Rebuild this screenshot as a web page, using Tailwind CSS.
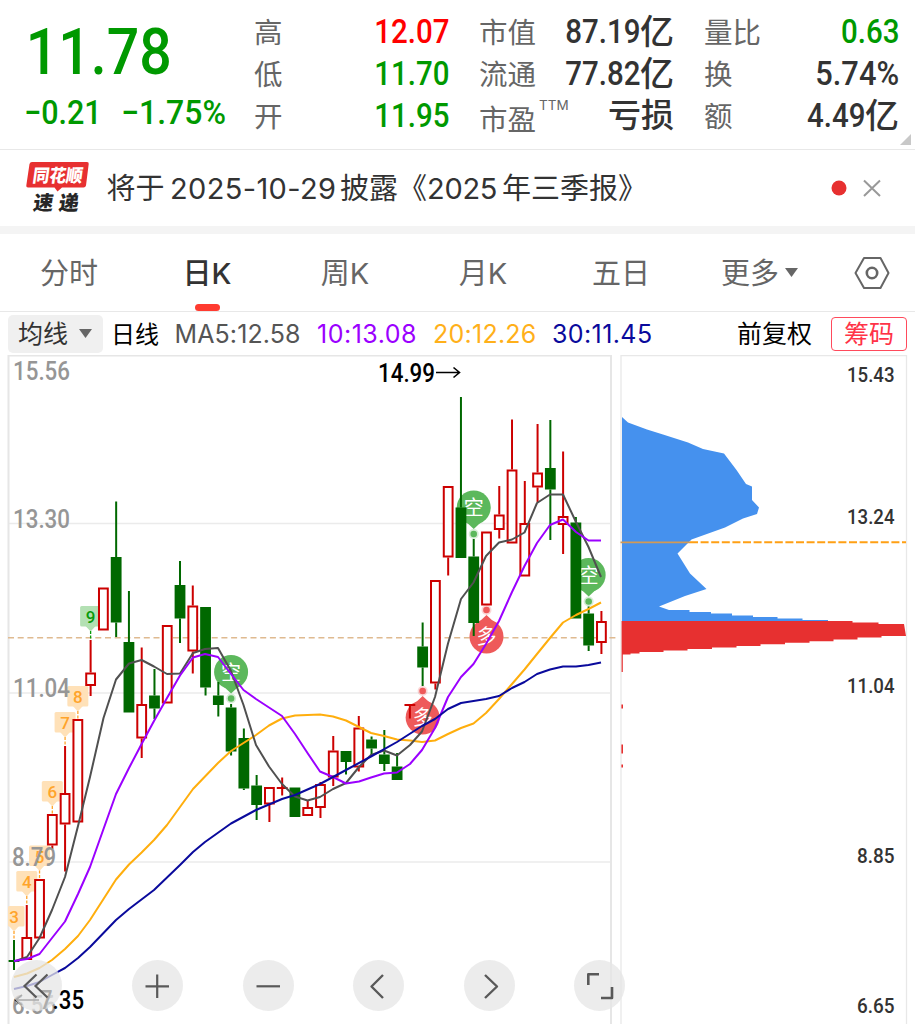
<!DOCTYPE html>
<html lang="zh-CN">
  <head>
    <meta charset="UTF-8" />
    <title>日K</title>
    <meta name="viewport" content="width=device-width, initial-scale=1.0" />
    <script src="https://cdn.jsdelivr.net/npm/@tailwindcss/browser@4"></script>
  </head>
  <body class="w-[915px] h-[1024px] overflow-hidden bg-white text-[#333] font-[Inter,'Noto_Sans_CJK_SC',sans-serif]">
    <!-- quote -->
    <header class="relative flex h-[150px] border-b border-[#e8e8e8] font-[Roboto,'Noto_Sans_CJK_SC',sans-serif]">
      <div class="w-[254px] pl-[24px] pt-[15px] text-[#090]">
        <div class="h-[74px] leading-[74px] text-[65px] font-medium"><span class="inline-block origin-left scale-x-[.88] pl-[2px]">11.78</span></div>
        <div class="flex h-[48px] leading-[48px] text-[33.5px] font-medium">
          <span class="w-[97px]"><span class="inline-block origin-left scale-x-[.91] whitespace-nowrap">−0.21</span></span>
          <span class="inline-block origin-left scale-x-[.955] whitespace-nowrap">−1.75%</span>
        </div>
      </div>
      <div class="w-[195px] pt-[11px] text-[28.5px] text-[#666]">
        <div class="flex h-[42px] items-center justify-between"><span class="pt-[4px]">高</span><b class="origin-right scale-x-[.88] text-[33.5px] font-medium text-[#f00]">12.07</b></div>
        <div class="flex h-[42px] items-center justify-between"><span class="pt-[4px]">低</span><b class="origin-right scale-x-[.88] text-[33.5px] font-medium text-[#090]">11.70</b></div>
        <div class="flex h-[42px] items-center justify-between"><span class="pt-[4px]">开</span><b class="origin-right scale-x-[.88] text-[33.5px] font-medium text-[#090]">11.95</b></div>
      </div>
      <div class="ml-[30px] w-[195px] pt-[11px] text-[28.5px] text-[#666]">
        <div class="flex h-[42px] items-center justify-between"><span class="pt-[4px]">市值</span><span class="flex items-center font-medium text-[#333]"><b class="-ml-6 origin-right scale-x-[.88] text-[33.5px] font-medium">87.19</b><span class="text-[34px]">亿</span></span></div>
        <div class="flex h-[42px] items-center justify-between"><span class="pt-[4px]">流通</span><span class="flex items-center font-medium text-[#333]"><b class="-ml-6 origin-right scale-x-[.88] text-[33.5px] font-medium">77.82</b><span class="text-[34px]">亿</span></span></div>
        <div class="flex h-[42px] items-center justify-between"><span class="flex"><span class="relative top-[5px]">市盈</span><span class="ml-[3px] text-[13.5px] font-[Inter]">TTM</span></span><span class="text-[33px] font-medium text-[#333]">亏损</span></div>
      </div>
      <div class="ml-[30px] w-[195px] pt-[11px] text-[28.5px] text-[#666]">
        <div class="flex h-[42px] items-center justify-between"><span class="pt-[4px]">量比</span><b class="origin-right scale-x-[.88] text-[33.5px] font-medium text-[#090]">0.63</b></div>
        <div class="flex h-[42px] items-center justify-between"><span class="pt-[4px]">换</span><b class="origin-right scale-x-[.92] text-[33.5px] font-medium text-[#333]">5.74%</b></div>
        <div class="flex h-[42px] items-center justify-between"><span class="pt-[4px]">额</span><span class="flex items-center font-medium text-[#333]"><b class="origin-right scale-x-[.88] text-[33.5px] font-medium">4.49</b><span class="text-[34px]">亿</span></span></div>
      </div>
      <svg class="absolute right-[4px] bottom-[4px]" width="11" height="11"><path d="M11 0V11H0z" fill="#c8c8c8" /></svg>
    </header>

    <!-- notice -->
    <div class="flex h-[76px] items-center">
      <svg class="ml-[26px] w-[64px] shrink-0" height="54" viewBox="0 0 64 54">
        <path d="M6 1H61q2 0 1.7 2L60 24.500q-.5 2-2.500 2H36l-4.500 4-3-4H2q-2 0-1.700-2L3.500 3Q4 1 6 1z" fill="#e73030" />
        <g font-family="'Noto Sans CJK SC',sans-serif" font-weight="900" transform="skewX(-8)">
          <text x="9" y="21" font-size="18" fill="#fff" textLength="50" lengthAdjust="spacingAndGlyphs">同花顺</text>
          <text x="13.500" y="49.500" font-size="20" fill="#262626">速</text>
          <text x="39" y="49.500" font-size="20" fill="#262626">递</text>
        </g>
      </svg>
      <div class="ml-[16.500px] flex w-[560px] pt-[2px] text-[29px] whitespace-nowrap">
        <span class="w-[63.500px]">将于</span><span class="w-[170px] tracking-[.35px]">2025-10-29</span><span>披露《</span><span class="w-[75px] tracking-[-.3px]">2025</span><span>年三季报》</span>
      </div>
      <svg class="ml-[164.500px]" width="52" height="18" viewBox="0 0 52 18">
        <circle cx="8" cy="9" r="7.500" fill="#e73030" />
        <path d="M33 1.500l16 15.500M49 1.500L33 17" stroke="#999" stroke-width="2" />
      </svg>
    </div>
    <div class="h-[8px] bg-[#f4f4f4]"></div>

    <!-- period tabs -->
    <nav class="flex h-[78px] items-center border-b border-[#e8e8e8] text-[29px] text-[#666]">
      <div class="w-[138px] pt-[3px] text-center">分时</div>
      <div class="relative flex h-full w-[138px] items-center justify-center pt-[3px] font-medium text-[#333]">日K
        <span class="absolute bottom-0 left-[57px] h-[7px] w-[25px] rounded-full bg-[#ff3b30]"></span>
      </div>
      <div class="w-[138px] pt-[3px] text-center">周K</div>
      <div class="w-[138px] pt-[3px] text-center">月K</div>
      <div class="w-[138px] pt-[3px] text-center">五日</div>
      <div class="flex w-[138px] items-center justify-center gap-[6px] pl-[1px]"><span class="pt-[3px]">更多</span><svg width="13" height="9"><path d="M0 0H13L6.500 9z" fill="#666" /></svg></div>
      <svg class="ml-[26px]" width="36" height="34" viewBox="0 0 36 34" fill="none" stroke="#666">
        <path d="M10 2H26.500L34.500 17 26.500 32H10L1.500 17z" stroke-width="2" stroke-linejoin="round" />
        <circle cx="18" cy="17" r="5.200" stroke-width="2.600" />
      </svg>
    </nav>

    <!-- indicator row -->
    <div class="flex h-[43px] items-center pl-[8px] text-[25px] whitespace-nowrap">
      <div class="flex h-[38px] w-[95px] items-center gap-[11px] rounded-[5px] bg-[#f0f0f0] pl-[10px]"><span class="pt-[2px]">均线</span><svg width="13" height="9"><path d="M0 0H13L6.500 9z" fill="#666" /></svg></div>
      <div class="ml-[8px] w-[63.500px] pt-[2px] text-[24px] text-black">日线</div>
      <div class="w-[142.500px] pt-[2px] tracking-[.1px] text-[#555]">MA5:12.58</div>
      <div class="w-[116px] pt-[2px] tracking-[.5px] text-[#9b00ff]">10:13.08</div>
      <div class="w-[119px] pt-[2px] tracking-[.25px] text-[#ffb01a]">20:12.26</div>
      <div class="w-[185px] pt-[2px] tracking-[.4px] text-[#0a0a9c]">30:11.45</div>
      <div class="w-[94px] pt-[2px] text-black">前复权</div>
      <div class="flex h-[34px] w-[76px] items-center justify-center rounded-[4px] border border-[#ff4a5c] pt-[2px] text-[#ff3347]">筹码</div>
    </div>

    <div class="relative flex h-[669px]">
      <!-- candles -->
      <svg class="shrink-0" width="616" height="669" viewBox="0 355 616 669" font-family="Roboto, 'Noto Sans CJK SC', sans-serif">
        <path d="M8 523.500H611M8 693H611M8 862H611" stroke="#ebebeb" stroke-width="1.300" />
        <path d="M8.500 1030V355.500H611V1030" fill="none" stroke="#e6e6e6" stroke-width="2" />
        <path d="M8 637.800H616" stroke="#dfba90" stroke-width="1.400" stroke-dasharray="6 3.700" />
        <g id="tags" font-size="17" text-anchor="middle"></g>
        <g id="pins" font-size="20" text-anchor="middle"></g>
        <g id="candles"></g>
        <g fill="none" stroke-width="2" stroke-linejoin="round">
          <polyline stroke="#ffae0d" points="14,977 27,973.5 39.5,968 52,960 65,949 78,936 90,920 103.500,899 116,879.5 129,864.5 141.600,852.5 154,840 167,825 180,807 193,789 205,776.5 218,763 231,751 243.500,743 256,735 269,725.5 282,718.5 295,715.5 320,714.5 333,716.5 346,720.5 359,727 371,733 384,736 397,739.5 410,740.5 422,742 435,740.5 448,734 461,728 473.500,723.5 486,713 499,699 512,684 524.500,669.5 537,654 550,638 563,622.5 576,615 588.500,609 601,602.5" />
          <polyline stroke="#505050" points="14,961.5 27,957 39.5,938 52,910 65,877 78,826 90,777 103.500,718 116,679.5 129,663.5 141.600,660 154,666.5 167,674 180,673.5 193,653 205,649 218,648 231,671 243.500,705 256,745 269,766.5 282,784 295,796.5 307.500,800.5 320,797 333,789 346,783 359,767 371,755 384,750.5 397,755.5 410,745 422,731.5 435,697 448,643.5 461,599 473.500,582.5 486,556 499,542.5 512,539.5 524.500,532.5 537,503 550,494.5 563,494.5 576,522 588.500,547 601,577" />
          <polyline stroke="#9b00ff" points="14,961 27,959 39.5,954 52,938 65,921.5 78,894 90,867 103.500,829 116,794 129,768 141.600,744 154,721 167,698 180,675.5 193,657.5 205,654 218,657 231,674 243.500,690 256,699 282,716 295,734 307.500,753 320,771.5 333,777 346,783.5 359,781.5 371,777.5 384,773.5 397,772.5 410,764 422,750 435,728 448,697 461,677 473.500,664 486,644 499,621 512,592 524.500,566 537,543 550,525 563,519.5 576,532 588.500,540.5 601,540.5" />
          <polyline stroke="#0a0a9c" points="14,989 27,986 39.5,982 52,975 65,968 78,958 90,947 103.500,933 116,920 129,909 154,890 180,865 193,852 205,842 231,823.5 256,810 282,799 295,795 320,784 346,770 371,756.5 397,742 422,726 435,719 448,709 461,703 486,699 499,696 512,688 524.500,682 537,674 550,669.5 563,666.5 576,666.5 588.500,665 601,662.5" />
        </g>
        <g fill="#969696" font-size="25" font-weight="500">
          <text x="13" y="379.500" textLength="57" lengthAdjust="spacingAndGlyphs">15.56</text>
          <text x="13" y="527.500" textLength="57" lengthAdjust="spacingAndGlyphs">13.30</text>
          <text x="13" y="696.500" textLength="57" lengthAdjust="spacingAndGlyphs">11.04</text>
          <text x="12" y="866" textLength="44" lengthAdjust="spacingAndGlyphs">8.79</text>
          <text x="12" y="1013.500" textLength="44" lengthAdjust="spacingAndGlyphs">6.56</text>
        </g>
        <g fill="#000" font-size="25" font-weight="500">
          <text x="378" y="382" textLength="57" lengthAdjust="spacingAndGlyphs">14.99</text>
          <text x="40" y="1009" textLength="44" lengthAdjust="spacingAndGlyphs">7.35</text>
        </g>
        <path d="M436 372.500H459M453.500 367.500L459.500 372.500 453.500 377.500M39 1000H16M22 995L15.500 1000 22 1005" fill="none" stroke="#000" stroke-width="1.600" />
      </svg>

      <!-- chip distribution -->
      <svg class="shrink-0" width="299" height="669" viewBox="616 355 299 669" font-family="Roboto, sans-serif">
        <path d="M621 1030V355.500H906.500V1030" fill="none" stroke="#e8e8e8" stroke-width="1.300" />
        <path fill="#4591ee" d="M622 417L628 422.500 647 429.500 663 434.500 688 442.500 703 449 724 453.500 736.500 470 746 484 752 486.500V500L759 507.500 757 514 743 518.500 725 527.500 691.500 539.500 677.500 553.500 690 573.500 706.500 589 685 596 659 606.500 669 610H689.500V612H711V613.500H732V615.500H753V617H777.500V618.500H802.500V620H828V621.500H622z" />
        <path fill="#e73030" d="M622 621H852.500v1.500h26v1.500h25.500l2 12h-24.500v1.500h-24v2h-24v1.700h-24v1.500h-24.500v1.600h-24.500v1.600h-24v1.500h-24.500v1.600h-24.500v1.600h-24v1.500h-24v1.400h-9v1H622.800V672H621.600V621z" />
        <path d="M622.200 704.500V708.500M622.200 744.500V753.500M622.200 764.500V767.500" stroke="#e73030" stroke-width="1.600" />
        <path d="M620.500 542.300H690" stroke="#d29a55" stroke-width="1.700" />
        <path d="M690 542.300H906" stroke="#ffa014" stroke-width="1.900" stroke-dasharray="8 2.600" />
        <g fill="#333" font-size="20.500" font-weight="500">
          <text x="847" y="382" textLength="47.500" lengthAdjust="spacingAndGlyphs">15.43</text>
          <text x="847" y="524" textLength="47.500" lengthAdjust="spacingAndGlyphs">13.24</text>
          <text x="847" y="693" textLength="47.500" lengthAdjust="spacingAndGlyphs">11.04</text>
          <text x="857" y="862.500" textLength="37.500" lengthAdjust="spacingAndGlyphs">8.85</text>
          <text x="857" y="1012.500" textLength="37.500" lengthAdjust="spacingAndGlyphs">6.65</text>
        </g>
      </svg>

      <!-- chart controls -->
      <div class="absolute bottom-[13px] left-[11px] flex gap-[59.600px]">
        <button class="mr-[10.400px] flex size-[51px] items-center justify-center rounded-full bg-[#e6e6e6]/75">
          <svg width="30" height="30" fill="none" stroke="#595959" stroke-width="2.200"><path d="M14.500 3.500L2.500 15 14.500 26.500M25.500 3.500L13.500 15 25.500 26.500" /></svg>
        </button>
        <button class="flex size-[51px] items-center justify-center rounded-full bg-[#e6e6e6]/75">
          <svg width="30" height="30" fill="none" stroke="#595959" stroke-width="2.200"><path d="M3.500 15.300H27M15.200 3.500V27" /></svg>
        </button>
        <button class="flex size-[51px] items-center justify-center rounded-full bg-[#e6e6e6]/75">
          <svg width="30" height="30" fill="none" stroke="#595959" stroke-width="2.200"><path d="M3.500 15.300H27" /></svg>
        </button>
        <button class="flex size-[51px] items-center justify-center rounded-full bg-[#e6e6e6]/75">
          <svg width="30" height="30" fill="none" stroke="#595959" stroke-width="2.400"><path d="M19 4L7.500 15.500 19 27" stroke-linejoin="round" /></svg>
        </button>
        <button class="flex size-[51px] items-center justify-center rounded-full bg-[#e6e6e6]/75">
          <svg width="30" height="30" fill="none" stroke="#595959" stroke-width="2.400"><path d="M11 4L23 15.500 11 27" stroke-linejoin="round" /></svg>
        </button>
        <button class="flex size-[51px] items-center justify-center rounded-full bg-[#e6e6e6]/75">
          <svg width="30" height="30" fill="none" stroke="#595959" stroke-width="2.600"><path d="M14 3.300H3.300V14M16 27H27V16" stroke-linejoin="round" /></svg>
        </button>
      </div>
    </div>

    <script>
      // [colour, high, body top, body bottom, low]
      const days = [
        ['g', 940, 960, 962, 970], ['r', 905, 937, 960, 960], ['r', 879, 879, 938.5, 938.5],
        ['r', 814, 814, 845.5, 849], ['r', 746, 793, 824.5, 871.5], ['r', 719, 719, 822.5, 822.5],
        ['r', 640, 672.5, 686, 696], ['r', 587.5, 587.5, 630.5, 630.5], ['g', 501.5, 557, 622.5, 637],
        ['g', 591, 642, 712.5, 712.5], ['r', 647.5, 704, 738.5, 758], ['g', 669, 695.5, 708.5, 719],
        ['r', 625, 625, 703.5, 703.5], ['g', 561, 585, 618.5, 643], ['r', 585.5, 605.5, 651.5, 673.5],
        ['g', 607, 607, 687.5, 695.5], ['g', 682, 695.5, 705, 716.5], ['g', 704, 707.5, 751.5, 755.5],
        ['g', 728.5, 738, 788.5, 790], ['g', 775, 785.5, 805, 820], ['r', 787, 787, 804.5, 822],
        ['r', 777.5, 787, 789, 795.5], ['g', 787.5, 787.5, 817, 817], ['r', 801, 807, 816, 816],
        ['r', 782, 784, 808, 818], ['r', 736, 750.5, 777.5, 786], ['g', 751, 751, 762, 774.5],
        ['r', 716, 727.5, 767.5, 771.5], ['g', 736.5, 739.5, 748.5, 755], ['g', 730, 754.5, 764, 771],
        ['g', 753, 766.5, 780, 780], ['r', 704, 704, 706, 718.5], ['g', 622.5, 646.5, 667.5, 686],
        ['r', 580, 580, 683.5, 689.5], ['r', 486, 486, 557.5, 575.5], ['g', 397, 507.5, 558, 558],
        ['g', 539, 556.5, 623, 636], ['r', 531.5, 531.5, 605.5, 605.5], ['r', 486, 514.5, 530, 538.5],
        ['r', 419.5, 469.5, 543.5, 543.5], ['r', 481, 523, 576.5, 576.5], ['r', 424, 472.5, 487.5, 502],
        ['g', 420, 468, 489.5, 540], ['r', 451.5, 516, 525, 554], ['g', 517, 522.5, 618.5, 618.5],
        ['g', 606.5, 613.5, 645.5, 651], ['r', 611, 621, 643, 654],
      ]
      const dayX = (i) => 14 + i * 12.77

      let candles = ''
      days.forEach(([c, high, top, bottom, low], i) => {
        const x = dayX(i)
        const color = c === 'g' ? '#006800' : '#cc0000'
        candles += `<path d="M${x} ${high}V${top}M${x} ${bottom}V${low}" stroke="${color}" stroke-width="2"/>`
        if (c === 'g' || bottom - top < 3) {
          candles += `<rect x="${x - 5.4}" y="${top}" width="10.8" height="${bottom - top}" fill="${color}"/>`
        } else {
          candles += `<rect x="${x - 4.4}" y="${top + 1}" width="8.8" height="${bottom - top - 2}" fill="#fff" stroke="${color}" stroke-width="2"/>`
        }
      })
      document.getElementById('candles').innerHTML = candles

      // [label, day, tag top, line end]
      const tags = [
        [3, 0, 906, 940], [4, 1, 871, 905], [5, 2, 845.5, 879], [6, 3, 781, 814],
        [7, 4, 712, 746], [8, 5, 686, 719], [9, 6, 606, 640],
      ]
      document.getElementById('tags').innerHTML = tags
        .map(([n, i, y, end]) => {
          const x = dayX(i)
          const left = Math.max(x - 10.5, 8)
          const bg = n === 9 ? '#b3e0b3' : '#ffe1b8'
          const fg = n === 9 ? '#0a9a0a' : '#ffa42b'
          return `<rect x="${left}" y="${y}" width="${x + 10.5 - left}" height="20.500" rx="1.500" fill="${bg}"/>
            <path d="M${x - 5} ${y + 20}h10l-5 5.500z" fill="${bg}"/>
            <path d="M${x} ${y + 25}V${end}" stroke="${fg}" stroke-width="1.300" stroke-dasharray="3 1.500"/>
            <text x="${x}" y="${y + 17}" font-weight="500" fill="${fg}">${n}</text>`
        })
        .join('')

      // [label, day, circle centre y, dot y]
      const pins = [
        ['空', 17, 672, 698.5], ['空', 36, 507.5, 534], ['空', 45, 575, 601.5],
        ['多', 32, 717.5, 691], ['多', 37, 636.5, 610],
      ]
      document.getElementById('pins').innerHTML = pins
        .map(([t, i, y, dot]) => {
          const x = dayX(i)
          const bg = t === '空' ? '#5cb85c' : '#ee5a5a'
          const s = dot > y ? 1 : -1
          return `<circle cx="${x}" cy="${y}" r="17" fill="${bg}"/>
            <path d="M${x - 8} ${y + 14 * s}L${x} ${y + 21.5 * s}L${x + 8} ${y + 14 * s}z" fill="${bg}"/>
            <circle cx="${x}" cy="${dot}" r="5" fill="${bg}" fill-opacity=".25"/>
            <circle cx="${x}" cy="${dot}" r="3.300" fill="${bg}"/>
            <text x="${x}" y="${y + 7.5}" fill="#fff">${t}</text>`
        })
        .join('')
    </script>
  </body>
</html>
